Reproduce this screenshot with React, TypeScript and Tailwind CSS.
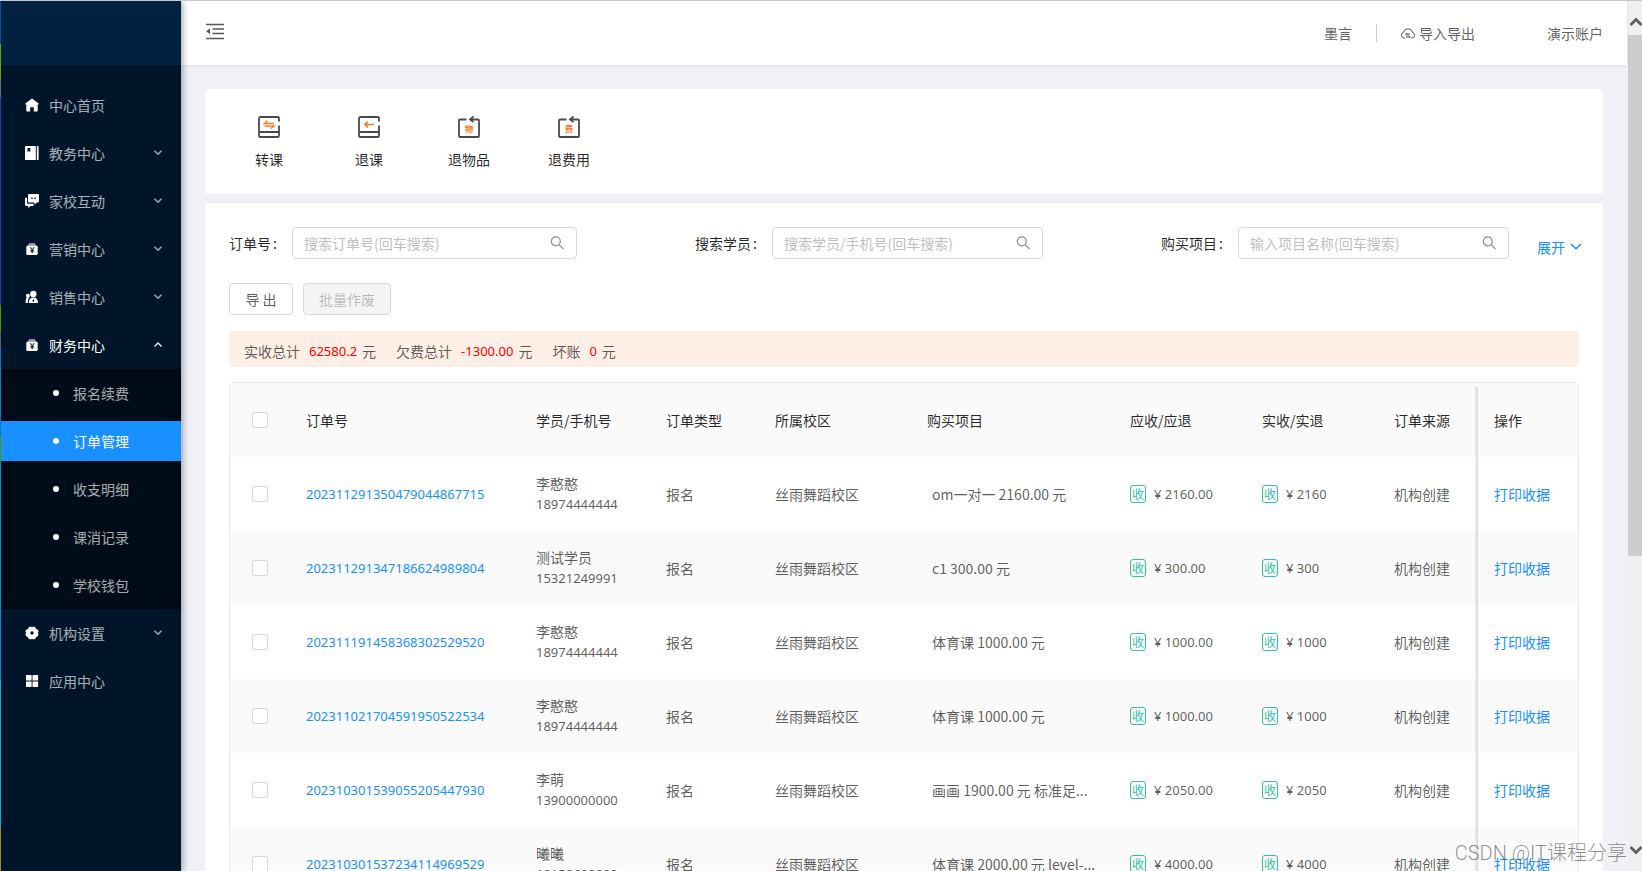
import React from 'react';

type IconName = 'home' | 'book' | 'chat' | 'bag' | 'people' | 'gear' | 'grid';

interface MenuEntry {
  label: string;
  icon: IconName;
  expandable?: boolean;
  children?: string[];
}

interface Order {
  no: string;
  name: string;
  phone: string;
  item: string;
  due: string;
  paid: string;
}

const menu: MenuEntry[] = [
  { label: '中心首页', icon: 'home' },
  { label: '教务中心', icon: 'book', expandable: true },
  { label: '家校互动', icon: 'chat', expandable: true },
  { label: '营销中心', icon: 'bag', expandable: true },
  { label: '销售中心', icon: 'people', expandable: true },
  {
    label: '财务中心',
    icon: 'bag',
    expandable: true,
    children: ['报名续费', '订单管理', '收支明细', '课消记录', '学校钱包'],
  },
  { label: '机构设置', icon: 'gear', expandable: true },
  { label: '应用中心', icon: 'grid' },
];

const activeItem = '订单管理';

const orders: Order[] = [
  { no: '202311291350479044867715', name: '李憨憨', phone: '18974444444', item: 'om一对一 2160.00 元', due: '2160.00', paid: '2160' },
  { no: '202311291347186624989804', name: '测试学员', phone: '15321249991', item: 'c1 300.00 元', due: '300.00', paid: '300' },
  { no: '202311191458368302529520', name: '李憨憨', phone: '18974444444', item: '体育课 1000.00 元', due: '1000.00', paid: '1000' },
  { no: '202311021704591950522534', name: '李憨憨', phone: '18974444444', item: '体育课 1000.00 元', due: '1000.00', paid: '1000' },
  { no: '202310301539055205447930', name: '李萌', phone: '13900000000', item: '画画 1900.00 元 标准足...', due: '2050.00', paid: '2050' },
  { no: '202310301537234114969529', name: '曦曦', phone: '18158688888', item: '体育课 2000.00 元 level-...', due: '4000.00', paid: '4000' },
];

const MenuIcon: React.FC<{ name: IconName }> = ({ name }) => (
  <svg viewBox="0 0 14 14" className="w-3.5 h-3.5 shrink-0 text-white" fill="currentColor" aria-hidden="true">
    {name === 'home' && <path d="M7 .6 13.6 5.4v1.2h-.9v6.2c0 .4-.2.6-.6.6H8.800V9.200H5.200v4.200H1.900c-.4 0-.6-.2-.6-.6V6.600H.4V5.400z" />}
    {name === 'book' && (
      <>
        <path fillRule="evenodd" d="M1 0h9.800v14H1c-.6 0-1-.4-1-1V1c0-.6.4-1 1-1zm1.500 2v4l1.400-1.100L5.300 6V2z" />
        <path d="M11.800 0h.8c.6 0 1 .4 1 1v12c0 .6-.4 1-1 1h-.8z" />
      </>
    )}
    {name === 'chat' && (
      <>
        <path fillRule="evenodd" d="M4.200 0h8.600c.7 0 1.200.5 1.200 1.200v6.200c0 .7-.5 1.200-1.200 1.200h-.9L9.800 10.500 9.200 8.600h-5C3.500 8.600 3 8.100 3 7.400V1.200C3 .5 3.500 0 4.200 0zM6.300 3.600v1.300h1.400V3.600zm3.100 0v1.300h1.400V3.600z" />
        <path d="M2 3.800v4.600c0 .8.500 1.300 1.300 1.300h5l.5 1.600c-.2.500-.6.700-1 .7H5.600L3.200 14v-2H1.200C.5 12 0 11.500 0 10.800V5c0-.7.500-1.200 1.200-1.200z" />
      </>
    )}
    {name === 'bag' && (
      <>
        <path d="M4 1.200h6v1H4zM3 2.600h8v.8H3z" opacity=".75" />
        <rect x="1.300" y="3.600" width="11.400" height="9.400" rx="1.600" />
        <text x="7" y="11.300" fontSize="8" fontWeight="700" textAnchor="middle" fill="#001529">¥</text>
      </>
    )}
    {name === 'people' && (
      <>
        <circle cx="8.300" cy="4" r="3.200" />
        <path d="M3.800 13c0-3.400 1.500-5.400 4.500-5.400s4.700 2 4.700 5.400zM2.900 3.800c1.100 0 2 .9 2 2 0 .7-.3 1.200-.8 1.600-.9 1.300-1.300 3.200-1.300 5.600H.6c0-2.500.2-4.100 1.100-5.400-.5-.4-.8-1-.8-1.800 0-1.100.9-2 2-2z" />
        <path d="m8.300 9-1 2 1 1 1-1z" fill="#001529" />
      </>
    )}
    {name === 'gear' && (
      <path fillRule="evenodd" d="M5.300.6 7 1.300 8.700.6l1.800.8.6 1.700 1.700.6.8 1.700L12.900 7l.7 1.600-.8 1.700-1.700.6-.6 1.700-1.800.8L7 12.700l-1.700.7-1.800-.8-.6-1.700-1.700-.6-.8-1.700L1.100 7 .4 5.400l.8-1.700 1.700-.6.6-1.700zM7 5.300a1.700 1.700 0 1 0 0 3.400 1.700 1.700 0 0 0 0-3.400z" />
    )}
    {name === 'grid' && <path d="M1 1h5.600v5.600H1zM7.500 1h5.600v5.600H7.500zM1 7.500h5.600v5.600H1zM7.500 7.500h5.600v5.600H7.500z" />}
  </svg>
);

const Chevron: React.FC<{ up?: boolean; className?: string }> = ({ up, className }) => (
  <svg viewBox="0 0 10 10" className={className} fill="none" stroke="currentColor" aria-hidden="true">
    <path d={up ? 'M1.500 6.500 5 3l3.500 3.500' : 'M1.500 2.800 5 6.300l3.500-3.500'} />
  </svg>
);

const Sidebar: React.FC = () => (
  <aside className="w-[180px] shrink-0 bg-[#001529] shadow-[2px_0_6px_rgba(0,21,41,0.35)] z-20 relative">
    <div className="h-16 bg-[#002140]" />
    <nav className="py-4 flex flex-col">
      {menu.map((entry) => (
        <React.Fragment key={entry.label}>
          <a
            href="#"
            className={`h-10 my-1 pl-6 pr-[18px] flex items-center gap-2.5 ${entry.children ? 'text-white' : 'text-white/65'}`}
          >
            <MenuIcon name={entry.icon} />
            <span className="flex-1">{entry.label}</span>
            {entry.expandable && <Chevron up={!!entry.children} className="w-2.5 h-2.5 stroke-[1.3]" />}
          </a>
          {entry.children && (
            <div className="flex flex-col bg-[#000c17] shadow-[inset_0_2px_8px_rgba(0,0,0,0.45)]">
              {entry.children.map((child) => (
                <a
                  key={child}
                  href="#"
                  className={`h-10 my-1 pl-[52px] flex items-center gap-3.5 ${
                    child === activeItem ? 'bg-[#1890ff] text-white' : 'text-white/65'
                  }`}
                >
                  <span className="w-1.5 h-1.5 rounded-full bg-white" />
                  {child}
                </a>
              ))}
            </div>
          )}
        </React.Fragment>
      ))}
    </nav>
  </aside>
);

const TopBar: React.FC = () => (
  <header className="h-16 shrink-0 bg-white shadow-[0_1px_4px_rgba(0,21,41,0.08)] px-6 flex items-center text-black/65 relative z-10">
    <button type="button" aria-label="收起菜单" className="self-start mt-5">
      <svg viewBox="0 0 20 20" className="w-5 h-5 text-[#595959]" fill="none" stroke="currentColor" strokeWidth="1.500">
        <path d="M1 3.500h18M7.500 8h11.500M7.500 12.500h11.500M1 17.500h18" />
        <path d="M5 7.200v6L1.200 10.200z" fill="currentColor" stroke="none" />
      </svg>
    </button>
    <div className="ml-auto flex items-center">
      <a href="#">墨言</a>
      <span className="mx-6 w-px h-[18px] bg-[#ccc]" />
      <a href="#" className="flex items-center gap-1">
        <svg viewBox="0 0 14 14" className="w-3.5 h-3.5" fill="none" stroke="currentColor" aria-hidden="true">
          <path d="M4 12H3.400A2.900 2.900 0 0 1 2.600 6.300 4.500 4.500 0 0 1 11.400 6.300a2.900 2.900 0 0 1-.8 5.700H10" />
          <path d="M4.600 8.500 6 7v5M8 7v5l1.500-1.500" />
        </svg>
        导入导出
      </a>
      <a href="#" className="ml-[72px]">演示账户</a>
    </div>
  </header>
);

const BookShape: React.FC = () => (
  <path d="M21 5.500V2.200c0-.7-.5-1.200-1.200-1.200H2.600C1.700 1 1 1.700 1 2.600v16.800c0 .9.700 1.600 1.600 1.600h17.200c.7 0 1.200-.5 1.200-1.200V9.500M1.500 16h19" />
);

const BoxShape: React.FC = () => (
  <>
    <path d="M8.500 3.500H2c-.6 0-1 .4-1 1V20c0 .6.400 1 1 1h18c.6 0 1-.4 1-1V4.500c0-.6-.4-1-1-1h-7" />
    <path d="M15.500.5 12 3.500l3.500 2.500" />
  </>
);

const Actions: React.FC = () => {
  const items = [
    {
      label: '转课',
      art: (
        <>
          <BookShape />
          <path d="M16 7.500H6.500L9.500 4.800M6.500 10H16l-3 2.500" stroke="#ff7a1a" strokeWidth="1.500" />
        </>
      ),
    },
    {
      label: '退课',
      art: (
        <>
          <BookShape />
          <path d="M16 8.500H7M9.800 5.500 6.800 8.500l3 3" stroke="#ff7a1a" strokeWidth="1.500" />
        </>
      ),
    },
    {
      label: '退物品',
      art: (
        <>
          <BoxShape />
          <text x="11" y="16" fontSize="8.500" fontWeight="700" textAnchor="middle" fill="#ff7a1a" stroke="none">物</text>
        </>
      ),
    },
    {
      label: '退费用',
      art: (
        <>
          <BoxShape />
          <text x="11" y="16" fontSize="8.500" fontWeight="700" textAnchor="middle" fill="#ff7a1a" stroke="none">费</text>
        </>
      ),
    },
  ];

  return (
    <section className="bg-white rounded-sm px-3.5 pt-[27px] pb-6 flex">
      {items.map((item) => (
        <button key={item.label} type="button" className="w-[100px] flex flex-col items-center gap-2.5 text-black/85">
          <svg viewBox="0 0 22 22" className="w-[22px] h-[22px]" fill="none" stroke="#4a4a4a" strokeWidth="1.800" aria-hidden="true">
            {item.art}
          </svg>
          <span className="leading-[22px]">{item.label}</span>
        </button>
      ))}
    </section>
  );
};

const SearchField: React.FC<{ id: string; label: string; placeholder: string }> = ({ id, label, placeholder }) => (
  <div className="w-5/6 flex items-center">
    <label htmlFor={id} className="mr-[15px] shrink-0 text-black/85">
      {label}
      <span className="ml-0.5">:</span>
    </label>
    <div className="flex-1 min-w-0 h-8 pl-[11px] pr-3 flex items-center border border-[#d9d9d9] rounded">
      <input
        id={id}
        type="text"
        placeholder={placeholder}
        className="flex-1 min-w-0 outline-none bg-transparent placeholder:text-[#bfbfbf]"
      />
      <svg viewBox="0 0 14 14" className="w-3.5 h-3.5 text-[#8c8c8c]" fill="none" stroke="currentColor" strokeWidth="1.200" aria-hidden="true">
        <circle cx="5.800" cy="5.300" r="4.500" />
        <path d="m9 8.600 4.500 4.400" />
      </svg>
    </div>
  </div>
);

const Amount: React.FC<{ value: string }> = ({ value }) => (
  <span className="flex items-center gap-2">
    <span className="w-4 h-[18px] flex items-center justify-center border border-[#36bfa8] rounded-[3px] text-xs text-[#36bfa8]">收</span>
    <span className="text-[13px] font-['Noto_Sans',sans-serif]">¥ {value}</span>
  </span>
);

const Tick: React.FC<{ label: string }> = ({ label }) => (
  <input
    type="checkbox"
    aria-label={label}
    className="block mx-auto w-4 h-4 appearance-none bg-white border border-[#d9d9d9] rounded-xs"
  />
);

const OrderTable: React.FC = () => (
  <div className="mt-[15px] relative border border-[#e8e8e8] rounded-t">
    <table className="w-full table-fixed text-left text-black/65">
      <colgroup>
        <col className="w-[60px]" />
        <col className="w-[230px]" />
        <col className="w-[130px]" />
        <col className="w-[109px]" />
        <col className="w-[152px]" />
        <col />
        <col className="w-[132px]" />
        <col className="w-[132px]" />
        <col className="w-[100px]" />
        <col className="w-[100px]" />
      </colgroup>
      <thead>
        <tr className="h-[74px] bg-[#fafafa] text-black/85">
          <th><Tick label="全选" /></th>
          <th className="px-4 font-normal">订单号</th>
          <th className="px-4 font-normal">学员/手机号</th>
          <th className="px-4 font-normal">订单类型</th>
          <th className="px-4 font-normal">所属校区</th>
          <th className="px-4 font-normal">购买项目</th>
          <th className="px-4 font-normal">应收/应退</th>
          <th className="px-4 font-normal">实收/实退</th>
          <th className="px-4 font-normal">订单来源</th>
          <th className="px-4 font-normal">操作</th>
        </tr>
      </thead>
      <tbody>
        {orders.map((order) => (
          <tr key={order.no} className="h-[74px] even:bg-[#fafafa]">
            <td><Tick label={order.no} /></td>
            <td className="px-4 text-[13px] font-['Noto_Sans',sans-serif]">
              <a href="#" className="text-[#1890ff]">{order.no}</a>
            </td>
            <td className="px-4 leading-[21px]">
              <div>{order.name}</div>
              <div className="text-[13px] font-['Noto_Sans',sans-serif]">{order.phone}</div>
            </td>
            <td className="px-4">报名</td>
            <td className="px-4">丝雨舞蹈校区</td>
            <td className="pl-[21px] whitespace-nowrap">{order.item}</td>
            <td className="px-4"><Amount value={order.due} /></td>
            <td className="px-4"><Amount value={order.paid} /></td>
            <td className="px-4">机构创建</td>
            <td className="px-4"><a href="#" className="text-[#1890ff]">打印收据</a></td>
          </tr>
        ))}
      </tbody>
    </table>
    {/* shadow of the pinned column */}
    <div className="absolute top-1 bottom-0 right-[100px] w-1 bg-gradient-to-l from-black/15 to-transparent pointer-events-none" />
  </div>
);

const Total: React.FC<{ label: string; value: string }> = ({ label, value }) => (
  <span className="flex items-center">
    {label}
    <span className="ml-[9px] mr-[5px] text-[13px] font-['Noto_Sans',sans-serif] text-[#ff0000]">{value}</span>
    元
  </span>
);

const OrdersPanel: React.FC = () => (
  <section className="mt-2 bg-white border-t border-[#e8e8e8] rounded-sm p-6">
    <div className="grid grid-cols-3 gap-x-12">
      <SearchField id="order-no" label="订单号" placeholder="搜索订单号(回车搜索)" />
      <SearchField id="student" label="搜索学员" placeholder="搜索学员/手机号(回车搜索)" />
      <div className="flex items-center justify-between">
        <SearchField id="item" label="购买项目" placeholder="输入项目名称(回车搜索)" />
        <a href="#" className="-mr-1 mt-2 flex items-center gap-1 text-[#1890ff] whitespace-nowrap">
          展开
          <Chevron className="w-3.5 h-3.5" />
        </a>
      </div>
    </div>

    <div className="mt-6 flex gap-2.5">
      <button type="button" className="h-8 w-16 border border-[#d9d9d9] rounded text-black/65">导 出</button>
      <button type="button" disabled className="h-8 px-[15px] border border-[#d9d9d9] rounded bg-[#f5f5f5] text-black/25">批量作废</button>
    </div>

    <div className="mt-4 h-9 px-[15px] pt-1 flex items-center gap-5 bg-[#feefe6] rounded text-black/65">
      <Total label="实收总计" value="62580.2" />
      <Total label="欠费总计" value="-1300.00" />
      <Total label="坏账" value="0" />
    </div>

    <OrderTable />
  </section>
);

const ScrollBar: React.FC = () => (
  <div className="w-[15px] shrink-0 bg-[#f0f0f0] flex flex-col text-[#606060] overflow-hidden">
    <button type="button" aria-label="向上滚动" className="h-[34px] shrink-0 pl-0.5 pt-2 flex items-center">
      <svg viewBox="0 0 14 10" className="w-3.5 h-2.5 shrink-0" fill="none" stroke="currentColor" strokeWidth="2.800">
        <path d="M1.500 8 7 2.500 12.500 8" />
      </svg>
    </button>
    <div className="flex-1 pl-px">
      <div className="h-[65%] bg-[#cdcdcd]" />
    </div>
    <button type="button" aria-label="向下滚动" className="h-[34px] shrink-0 pl-0.5 pb-2 flex items-center">
      <svg viewBox="0 0 14 10" className="w-3.5 h-2.5 shrink-0" fill="none" stroke="currentColor" strokeWidth="2.800">
        <path d="M1.500 2 7 7.500 12.500 2" />
      </svg>
    </button>
  </div>
);

export default function App() {
  return (
    <div className="relative h-screen overflow-hidden flex border-t border-[#c8c8c8] bg-[#f0f1f6] text-sm font-['Noto_Sans_CJK_SC',sans-serif]">
      {/* sliver of the desktop beside the window */}
      <div className="w-px shrink-0 bg-[linear-gradient(#0a4fb0_5%,#5fb812_5%_9%,#777_9%_11%,#0a4fb0_11%_35%,#55a010_35%_38%,#666_38%_40%,#0a80d8_40%_50%,#55a010_50%_53%,#0a90e0_53%_78%,#18b0e0_78%_95%,#b09040_95%)]" />
      <Sidebar />
      <div className="flex-1 min-w-0 flex flex-col">
        <TopBar />
        <main className="flex-1 min-h-0 overflow-hidden p-6">
          <Actions />
          <OrdersPanel />
        </main>
      </div>
      <ScrollBar />
      <div className="absolute right-[15px] bottom-0 z-30 text-xl leading-9 text-black/45 whitespace-nowrap pointer-events-none font-['Roboto','Noto_Sans_CJK_SC',sans-serif] font-light">
        CSDN @IT课程分享
      </div>
    </div>
  );
}
